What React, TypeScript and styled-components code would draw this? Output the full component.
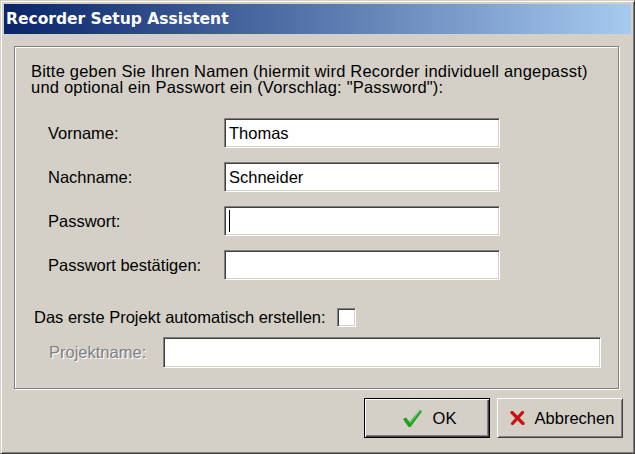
import React from "react";
import styled, { createGlobalStyle } from "styled-components";

const GlobalStyle = createGlobalStyle`
  html, body { margin: 0; padding: 0; background: #D4D0C8; }
  body { font-family: "Liberation Sans", Arial, sans-serif; }
  * { box-sizing: border-box; }
`;

const Window = styled.div`
  width: 635px;
  height: 454px;
  background: #d4d0c8;
  border: 1px solid;
  border-color: #d4d0c8 #404040 #404040 #d4d0c8;
  box-shadow: inset 1px 1px #ffffff, inset -1px -1px #808080;
  padding: 3px;
  display: flex;
  flex-direction: column;
  font-size: 16.5px;
  color: #000;
`;

const TitleBar = styled.div`
  height: 30px;
  flex: none;
  background: linear-gradient(to right, #0a246a 0%, #a6caf0 100%);
  display: flex;
  align-items: center;
  padding-left: 2px;
`;

const TitleText = styled.span`
  font-family: "DejaVu Sans", Tahoma, sans-serif;
  font-weight: bold;
  font-size: 15.5px;
  color: #ffffff;
`;

const GroupBox = styled.div`
  margin: 12px 12px 0 10px;
  height: 343px;
  flex: none;
  border: 1px solid #808080;
  box-shadow: inset 1px 1px #ffffff, 1px 1px #ffffff;
  padding: 16px 0 0 16px;
  display: flex;
  flex-direction: column;
`;

const Intro = styled.p`
  margin: 0;
  line-height: 16px;
  letter-spacing: 0.2px;
`;

const FieldGrid = styled.div`
  margin-top: 23px;
  padding-left: 17px;
  display: grid;
  grid-template-columns: 176px 276px;
  grid-auto-rows: 30px;
  row-gap: 14px;
  align-items: center;
`;

const Label = styled.span<{ $disabled?: boolean }>`
  color: ${(p) => (p.$disabled ? "#808080" : "#000")};
  text-shadow: ${(p) => (p.$disabled ? "1px 1px 0 #ffffff" : "none")};
  white-space: nowrap;
`;

const Field = styled.div<{ $h?: number }>`
  width: 100%;
  height: ${(p) => p.$h ?? 30}px;
  background: #ffffff;
  border: 1px solid;
  border-color: #808080 #ffffff #ffffff #808080;
  box-shadow: inset 1px 1px #404040, inset -1px -1px #d4d0c8;
  padding: 0 4px;
  display: flex;
  align-items: center;
  white-space: nowrap;
`;

const Caret = styled.span`
  width: 1px;
  height: 22px;
  background: #000;
`;

const CheckRow = styled.div`
  margin-top: 28px;
  padding-left: 3px;
  height: 19px;
  display: flex;
  align-items: center;
  gap: 11px;
`;

const CheckBox = styled.div`
  width: 19px;
  height: 19px;
  flex: none;
  background: #ffffff;
  border: 1px solid;
  border-color: #808080 #ffffff #ffffff #808080;
  box-shadow: inset 1px 1px #404040, inset -1px -1px #d4d0c8;
`;

const ProjectRow = styled.div`
  margin-top: 10px;
  padding-left: 18px;
  display: grid;
  grid-template-columns: 114px 438px;
  align-items: center;
`;

const ButtonRow = styled.div`
  margin-top: 9px;
  padding-right: 8px;
  display: flex;
  justify-content: flex-end;
  gap: 7px;
`;

const Button = styled.div<{ $default?: boolean }>`
  width: 126px;
  height: 40px;
  background: #d4d0c8;
  display: flex;
  align-items: center;
  justify-content: center;
  gap: 10px;
  border: 1px solid;
  border-color: ${(p) =>
    p.$default ? "#000000" : "#ffffff #404040 #404040 #ffffff"};
  box-shadow: ${(p) =>
    p.$default
      ? "inset 1px 1px #ffffff, inset -1px -1px #404040, inset -2px -2px #808080"
      : "inset 1px 1px #d4d0c8, inset -1px -1px #808080"};
  font-size: 16.5px;
  padding-left: 4px;
`;

const CheckIcon = () => (
  <svg width="21" height="19" viewBox="0 0 21 19">
    <polygon
      points="1,10 4,8.5 7.5,13 18,1 20,2.5 8.5,18 6.5,18"
      fill="#1f9e1f"
    />
    <polygon points="7.5,13 18,1 19,1.5 8,15" fill="#58c858" />
  </svg>
);

const CrossIcon = () => (
  <svg width="15" height="14" viewBox="0 0 15 14">
    <path d="M2 1.5 L13 12.5" stroke="#cc1010" strokeWidth="3.2" strokeLinecap="round" />
    <path d="M12.5 1.5 L2.5 12.5" stroke="#cc1010" strokeWidth="3.2" strokeLinecap="round" />
  </svg>
);

export default function App() {
  return (
    <>
      <GlobalStyle />
      <Window>
        <TitleBar>
          <TitleText>Recorder Setup Assistent</TitleText>
        </TitleBar>
        <GroupBox>
          <Intro>
            Bitte geben Sie Ihren Namen (hiermit wird Recorder individuell angepasst)
            <br />
            und optional ein Passwort ein (Vorschlag: "Password"):
          </Intro>
          <FieldGrid>
            <Label>Vorname:</Label>
            <Field>Thomas</Field>
            <Label>Nachname:</Label>
            <Field>Schneider</Field>
            <Label>Passwort:</Label>
            <Field>
              <Caret />
            </Field>
            <Label>Passwort bestätigen:</Label>
            <Field />
          </FieldGrid>
          <CheckRow>
            <Label>Das erste Projekt automatisch erstellen:</Label>
            <CheckBox />
          </CheckRow>
          <ProjectRow>
            <Label $disabled>Projektname:</Label>
            <Field $h={31} />
          </ProjectRow>
        </GroupBox>
        <ButtonRow>
          <Button $default>
            <CheckIcon />
            <span>OK</span>
          </Button>
          <Button>
            <CrossIcon />
            <span>Abbrechen</span>
          </Button>
        </ButtonRow>
      </Window>
    </>
  );
}
